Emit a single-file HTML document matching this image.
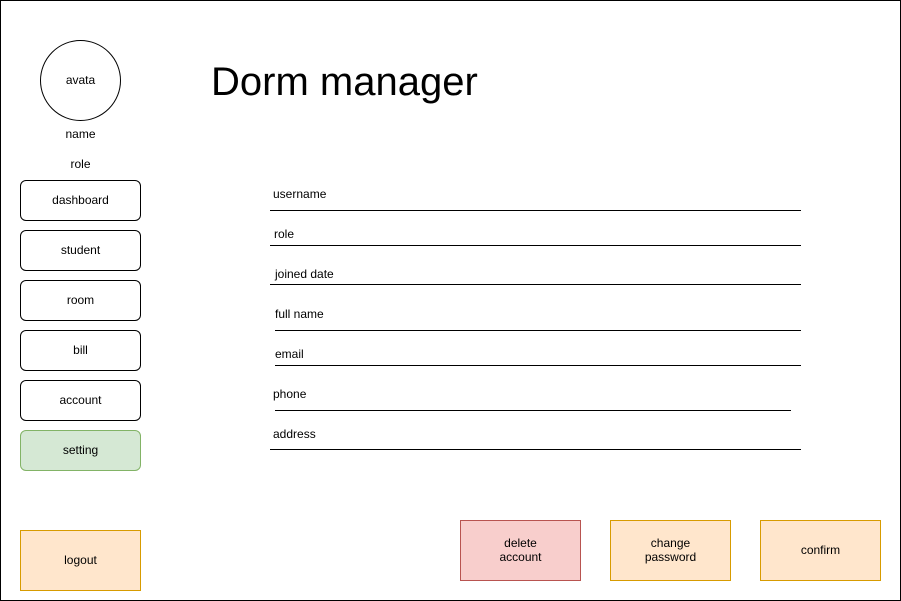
<!DOCTYPE html>
<html><head><style>
body{margin:0;width:901px;height:601px;position:relative;font-family:"Liberation Sans",Arial,sans-serif;font-size:12px;color:#000;background:#fff;overflow:hidden}
.a{position:absolute;box-sizing:border-box;display:flex;align-items:center;justify-content:center;text-align:center;padding-bottom:2px}
.b{border:1px solid #000;border-radius:6px;background:#fff}
.l{position:absolute;height:1px;background:#000}
.t{position:absolute;font-size:12px}
</style></head><body>
<div class="a" style="left:0;top:0;width:901px;height:601px;border:1px solid #000"></div>
<div class="a" style="left:40px;top:40px;width:81px;height:81px;border:1px solid #000;border-radius:50%">avata</div>
<div class="a" style="left:40px;top:126px;width:81px;height:18px">name</div>
<div class="a" style="left:40px;top:156px;width:81px;height:18px">role</div>
<div class="a b" style="left:20px;top:180px;width:121px;height:41px">dashboard</div>
<div class="a b" style="left:20px;top:230px;width:121px;height:41px">student</div>
<div class="a b" style="left:20px;top:280px;width:121px;height:41px">room</div>
<div class="a b" style="left:20px;top:330px;width:121px;height:41px">bill</div>
<div class="a b" style="left:20px;top:380px;width:121px;height:41px">account</div>
<div class="a b" style="left:20px;top:430px;width:121px;height:41px;background:#d5e8d4;border-color:#82b366">setting</div>
<div class="a" style="left:20px;top:530px;width:121px;height:61px;background:#ffe6cc;border:1px solid #d79b00">logout</div>
<div style="position:absolute;left:211px;top:58px;font-size:40px;line-height:48px">Dorm manager</div>
<div class="t" style="left:273px;top:187px">username</div><div class="l" style="left:270px;top:210px;width:531px"></div>
<div class="t" style="left:274px;top:227px">role</div><div class="l" style="left:270px;top:245px;width:531px"></div>
<div class="t" style="left:275px;top:267px">joined date</div><div class="l" style="left:270px;top:284px;width:531px"></div>
<div class="t" style="left:275px;top:307px">full name</div><div class="l" style="left:275px;top:330px;width:526px"></div>
<div class="t" style="left:275px;top:347px">email</div><div class="l" style="left:275px;top:365px;width:526px"></div>
<div class="t" style="left:273px;top:387px">phone</div><div class="l" style="left:275px;top:410px;width:516px"></div>
<div class="t" style="left:273px;top:427px">address</div><div class="l" style="left:270px;top:449px;width:531px"></div>
<div class="a" style="left:460px;top:520px;width:121px;height:61px;background:#f8cecc;border:1px solid #b85450">delete<br>account</div>
<div class="a" style="left:610px;top:520px;width:121px;height:61px;background:#ffe6cc;border:1px solid #d79b00">change<br>password</div>
<div class="a" style="left:760px;top:520px;width:121px;height:61px;background:#ffe6cc;border:1px solid #d79b00">confirm</div>
</body></html>
